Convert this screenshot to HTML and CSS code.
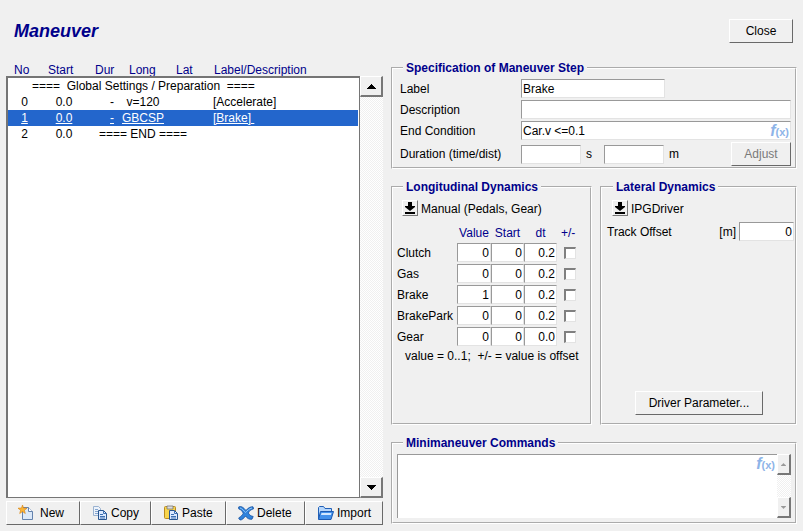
FILE: index.html
```html
<!DOCTYPE html>
<html lang="en">
<head>
<meta charset="utf-8">
<title>Maneuver</title>
<link rel="stylesheet" href="styles.css">
</head>
<body>
<svg class="defs" aria-hidden="true">
  <symbol id="up" viewBox="0 0 9 5"><path d="M4 0h1v1h1v1h1v1h1v1h1v1H0V4h1V3h1V2h1V1h1z"/></symbol>
  <symbol id="drop" viewBox="0 0 14 14"><path d="M5 1h4v4h3v1L7 10 2 6V5h3zM2 11h10v2H2z"/></symbol>
</svg>
<header class="top">
  <h1>Maneuver</h1>
  <button type="button" class="btn close">Close</button>
</header>
<main class="main">
  <section class="left">
    <div class="heads"><span>No</span><span>Start</span><span>Dur</span><span>Long</span><span>Lat</span><span>Label/Description</span></div>
    <div class="listrow">
      <div class="list">
        <table class="steps" aria-label="Maneuver steps">
          <colgroup><col class="c-no"><col class="c-start"><col class="c-dur"><col class="c-long"><col class="c-lat"><col></colgroup>
          <tbody>
            <tr><td colspan="6" class="global">====&nbsp; Global Settings / Preparation &nbsp;====</td></tr>
            <tr><td>0</td><td>0.0</td><td class="dur">-</td><td>v=120</td><td></td><td class="desc">[Accelerate]</td></tr>
            <tr class="selected"><td>1</td><td>0.0</td><td class="dur">-</td><td>GBCSP</td><td></td><td class="desc">[Brake]&nbsp;</td></tr>
            <tr><td>2</td><td>0.0</td><td colspan="4" class="end">==== END ====</td></tr>
          </tbody>
        </table>
      </div>
      <div class="scroll">
        <button type="button" aria-label="Scroll up"><svg width="9" height="5"><use href="#up"/></svg></button>
        <button type="button" aria-label="Scroll down"><svg class="flip" width="9" height="5"><use href="#up"/></svg></button>
      </div>
    </div>
    <div class="tools">
      <button type="button" class="t-new">
        <svg width="16" height="16"><path d="M4.500 2.500h6l4 4v8h-10z" fill="#dbe8f8" stroke="#6482ad"/><path d="M10.500 2.500v4h4" fill="#fff" stroke="#6482ad"/><path d="M4.500 0l1 3 3.500.2-2.600 2 .9 3.300-2.800-1.900-2.800 1.900.9-3.300L0 3.200 3.500 3z" fill="#f9b437" stroke="#d8820c" stroke-width=".6"/></svg>
        <span class="wide">New</span></button>
      <button type="button" class="t-copy">
        <svg width="16" height="16"><path d="M1.500 1.500h5l2 2v7h-7z" fill="#edf3fb" stroke="#9bb3d1"/><path d="M3 4.500h3M3 6.500h4M3 8.500h4" stroke="#86a6cf"/><path d="M6.500 5.500h5l3 3v6h-8z" fill="#dceaff" stroke="#28558f"/><path d="M11.500 5.500v3h3M8 9.500h3M8 11.500h5M8 13h5" fill="none" stroke="#3e70b2"/></svg>
        <span>Copy</span></button>
      <button type="button" class="t-paste">
        <svg width="16" height="16"><rect x="1.500" y="1.500" width="11" height="12" rx="1" fill="#f8d54c" stroke="#b98a22"/><path d="M4 1h6v3H4z" fill="#ddd" stroke="#777" stroke-width=".8"/><path d="M6.500 5.500h5l3 3v6h-8z" fill="#dceaff" stroke="#28558f"/><path d="M11.500 5.500v3h3M8 9.500h3M8 11.500h5M8 13h5" fill="none" stroke="#3e70b2"/></svg>
        <span>Paste</span></button>
      <button type="button" class="t-delete">
        <svg width="16" height="16"><path d="M.6 2C3 .6 5.500 2.500 8 5.500c2-2.600 4.500-4 7-3.700l.6 2C13 4.500 11.300 6 10.300 8c1 2 2.700 3 4.900 3.500L14 14.200c-3 .5-5-1-6.500-3.200C5.500 13.500 4.300 15 2 15L.6 13C3 11.500 4.400 10 5.300 8.200 4 6 3 4.500.8 4z" fill="#2f83dc" stroke="#174f9e" stroke-width=".8"/><path d="M2 3c2 .3 4 3 5.500 4.500C9 6 11 3.500 14 3" fill="none" stroke="#8fc5f7"/></svg>
        <span>Delete</span></button>
      <button type="button" class="t-import">
        <svg width="17" height="16"><path d="M1.500 14V2.500l1-1h4l1.500 2h6.500V7" fill="#b7d7fb" stroke="#2160b8"/><path d="M3.500 6.500h13l-2.500 8H1.500z" fill="#4391ec" stroke="#1c5ab2"/><path d="M4.500 8h10l-.7 2H4z" fill="#d3e8ff"/></svg>
        <span>Import</span></button>
    </div>
  </section>
  <section class="right">
    <fieldset>
      <legend>Specification of Maneuver Step</legend>
      <div class="spec">
        <label for="lab">Label</label><input id="lab" class="short" value="Brake">
        <label for="des">Description</label><input id="des">
        <label for="endc">End Condition</label>
        <div class="fxwrap"><input id="endc" value="Car.v &lt;=0.1"><span class="fx"><i>f</i>(x)</span></div>
        <label for="dur">Duration (time/dist)</label>
        <div class="duration"><input id="dur"><span>s</span><input aria-label="Distance"><span>m</span><button type="button" class="btn adjust" disabled>Adjust</button></div>
      </div>
    </fieldset>
    <div class="dynamics">
      <fieldset>
        <legend>Longitudinal Dynamics</legend>
        <div class="mode"><svg class="mode-icon" width="16" height="16"><use href="#drop"/></svg><select aria-label="Longitudinal mode"><option>Manual (Pedals, Gear)</option></select></div>
        <table class="pedals">
          <thead><tr><th></th><th>Value</th><th>Start</th><th>dt</th><th class="pm">+/-</th></tr></thead>
          <tbody>
            <tr><th>Clutch</th><td><input aria-label="Clutch value" value="0"></td><td><input aria-label="Clutch start" value="0"></td><td><input aria-label="Clutch dt" value="0.2"></td><td class="p-check"><input type="checkbox" aria-label="Clutch offset"></td></tr>
            <tr><th>Gas</th><td><input aria-label="Gas value" value="0"></td><td><input aria-label="Gas start" value="0"></td><td><input aria-label="Gas dt" value="0.2"></td><td class="p-check"><input type="checkbox" aria-label="Gas offset"></td></tr>
            <tr><th>Brake</th><td><input aria-label="Brake value" value="1"></td><td><input aria-label="Brake start" value="0"></td><td><input aria-label="Brake dt" value="0.2"></td><td class="p-check"><input type="checkbox" aria-label="Brake offset"></td></tr>
            <tr><th>BrakePark</th><td><input aria-label="BrakePark value" value="0"></td><td><input aria-label="BrakePark start" value="0"></td><td><input aria-label="BrakePark dt" value="0.2"></td><td class="p-check"><input type="checkbox" aria-label="BrakePark offset"></td></tr>
            <tr><th>Gear</th><td><input aria-label="Gear value" value="0"></td><td><input aria-label="Gear start" value="0"></td><td><input aria-label="Gear dt" value="0.0"></td><td class="p-check"><input type="checkbox" aria-label="Gear offset"></td></tr>
          </tbody>
        </table>
        <p class="note">value = 0..1;&nbsp; +/- = value is offset</p>
      </fieldset>
      <fieldset class="lateral">
        <legend>Lateral Dynamics</legend>
        <div class="lat-body">
          <div class="mode"><svg class="mode-icon" width="16" height="16"><use href="#drop"/></svg><select aria-label="Lateral mode"><option>IPGDriver</option></select></div>
          <div class="track"><label for="track">Track Offset</label><span>[m]</span><input id="track" value="0"></div>
          <button type="button" class="btn driver">Driver Parameter...</button>
        </div>
      </fieldset>
    </div>
    <fieldset>
      <legend>Minimaneuver Commands</legend>
      <div class="mini-row">
        <div class="fxwrap"><textarea aria-label="Minimaneuver Commands"></textarea><span class="fx"><i>f</i>(x)</span></div>
        <div class="scroll small">
          <button type="button" aria-label="Scroll up" disabled><svg width="5" height="3"><use href="#up"/></svg></button>
          <button type="button" aria-label="Scroll down" disabled><svg class="flip" width="5" height="3"><use href="#up"/></svg></button>
        </div>
      </div>
    </fieldset>
  </section>
</main>
</body>
</html>
```
FILE: styles.css
```css
* { box-sizing: border-box; }
body {
  margin: 0;
  min-height: 100vh;
  display: flex;
  flex-direction: column;
  background: #f0f0f0;
  color: #000;
  font: 12px/14px "Liberation Sans", Arial, sans-serif;
}
button, input, select, textarea { font: inherit; color: inherit; border-radius: 0; margin: 0; }
.defs { position: absolute; width: 0; height: 0; }
.flip { transform: rotate(180deg); }

.top { display: flex; justify-content: space-between; align-items: center; padding: 19px 10px 0 14px; }
h1 { margin: 0; font: italic bold 18px/24px "Liberation Sans", Arial, sans-serif; color: #00008b; }
.btn {
  height: 24px;
  padding: 0;
  background: #f0f0f0;
  border: solid;
  border-width: 1px;
  border-color: #fff #696969 #696969 #fff;
}
.btn:disabled { color: #7a7a7a; }
.close { width: 64px; }

.main {
  flex: 1;
  display: grid;
  grid-template-columns: minmax(0, 377fr) minmax(0, 406fr);
  column-gap: 8px;
  padding: 18px 6px 6px;
}
.left { display: flex; flex-direction: column; padding-top: 3px; }
.heads { display: grid; grid-template-columns: 34px 47px 34px 47px 38px 1fr; padding-left: 8px; line-height: 12px; color: #00008b; }
.listrow { flex: 1; display: flex; min-height: 300px; }
.list { flex: 1; background: #fff; border: 2px solid #757575; border-right-width: 1px; border-bottom-width: 1px; padding-right: 1px; }
.steps { width: 100%; table-layout: fixed; border-collapse: collapse; }
.c-no { width: 33px; }
.c-start { width: 46px; }
.c-dur { width: 27px; }
.c-long { width: 58px; }
.c-lat { width: 41px; }
.steps td { height: 16px; padding: 0; text-align: center; white-space: nowrap; }
.steps .global { text-align: left; padding-left: 24px; }
.steps .dur { text-align: right; }
.steps .desc { text-align: left; }
.steps .end { text-align: left; padding-left: 12px; }
.selected { background: #2366cc; color: #fff; text-decoration: underline; }

.scroll {
  width: 23px;
  display: flex;
  flex-direction: column;
  justify-content: space-between;
  background: repeating-conic-gradient(#fff 0 25%, #f0f0f0 0 50%) 0 0 / 2px 2px;
}
.scroll button {
  height: 21px;
  width: 100%;
  padding: 0;
  display: flex;
  align-items: center;
  justify-content: center;
  background: #f0f0f0;
  border: solid;
  border-width: 1px 2px 2px 1px;
  border-color: #fff #777 #777 #fff;
}
.small { width: 14px; }
.small button:disabled svg { fill: #999; }

.tools { display: grid; grid-template-columns: 74fr 71fr 75fr 79fr 78fr; margin-top: 3px; }
.tools button {
  height: 24px;
  padding: 0 0 0 11px;
  display: flex;
  align-items: center;
  gap: 3px;
  background: #f0f0f0;
  border: solid;
  border-width: 1px;
  border-color: #fff #696969 #696969 #fff;
}
.tools .wide { padding-left: 3px; }

.right { display: flex; flex-direction: column; gap: 11px; padding-bottom: 1px; }
fieldset { min-width: 0; margin: 0; padding: 0 4px; border: 2px groove #fff; }
legend { margin-left: 6px; padding: 0 3px; height: 14px; font-weight: bold; color: #00008b; }
input, textarea {
  width: 100%;
  background: #fff;
  border: 1px solid;
  border-color: #999 #e3e3e3 #e3e3e3 #999;
  outline: 0;
}
input { height: 19px; padding: 0 1px; display: block; }

.spec { display: grid; grid-template-columns: 121px 1fr; row-gap: 2px; align-items: center; padding: 4px 0 1px 3px; }
.short { width: 144px; }
.fxwrap { position: relative; flex: 1; }
.fx { position: absolute; right: 2px; top: 3px; color: #8db4e8; font-weight: bold; font-size: 11px; pointer-events: none; }
.fx i { font-size: 16px; }
.duration { display: flex; align-items: center; }
.duration input { width: 60px; }
.duration span { width: 23px; padding-left: 5px; }
.adjust { width: 60px; margin-left: auto; }

.dynamics { flex: 1; display: grid; grid-template-columns: 201fr 197fr; column-gap: 8px; }
.mode { position: relative; padding: 6px 5px 0; }
.mode-icon {
  position: absolute;
  left: 5px;
  pointer-events: none;
  border: 1px solid;
  border-color: #fff #777 #777 #fff;
}
select { appearance: none; display: block; height: 17px; padding: 0 0 0 19px; border: 0; background: none; outline: 0; }
.pedals { margin-top: 6px; border-collapse: collapse; table-layout: fixed; width: 186px; }
.pedals th { padding: 0; font-weight: normal; text-align: left; }
.pedals thead th { height: 19px; color: #00008b; text-align: center; }
.pedals thead th:nth-child(1) { width: 60px; }
.pedals thead th:nth-child(2) { width: 34px; }
.pedals thead th:nth-child(3) { width: 33px; }
.pedals thead th:nth-child(4) { width: 33px; }
.pedals thead .pm { text-align: left; padding-left: 4px; }
.pedals td { height: 21px; padding: 0; }
.pedals td input { text-align: right; }
.pedals .p-check { padding-left: 7px; }
.pedals input[type="checkbox"] {
  appearance: none;
  width: 12px;
  height: 12px;
  border: 2px solid;
  border-width: 2px 1px 1px 2px;
  border-color: #808080 #e3e3e3 #e3e3e3 #808080;
}
.note { margin: 2px 0 0 8px; white-space: nowrap; }
.lateral { padding: 0 1px 0 5px; }
.lat-body { height: 100%; display: flex; flex-direction: column; }
.track { display: flex; align-items: center; padding-top: 5px; }
.track span { margin: 0 3px 0 auto; }
.track input { width: 55px; text-align: right; }
.driver { width: 128px; margin: auto 0 8px 28px; }

.mini-row { display: flex; height: 64px; margin: 4px 0; }
textarea { display: block; height: 100%; resize: none; border-right: 0; border-bottom: 0; }
```
